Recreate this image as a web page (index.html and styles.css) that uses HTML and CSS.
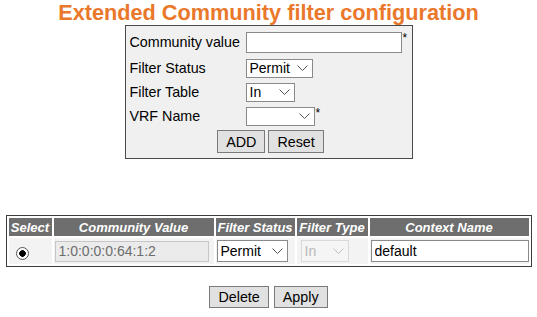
FILE: index.html
```html
<!DOCTYPE html>
<html lang="en">
<head>
    <meta charset="UTF-8">
    <meta name="viewport" content="width=device-width, initial-scale=1.0">
    <title>Extended Community filter configuration</title>
    <link rel="stylesheet" href="styles.css">
</head>
<body>
<h1 class="page-title">Extended Community filter configuration</h1>

<form class="add-box" onsubmit="return false;">
    <label for="commValue">Community value</label>
    <div class="field"><input type="text" id="commValue" class="text-in wide"><span class="req">*</span></div>

    <label for="filterStatus">Filter Status</label>
    <div class="field">
        <select id="filterStatus" class="sel sel-status">
            <option>Permit</option>
            <option>Deny</option>
        </select>
    </div>

    <label for="filterTable">Filter Table</label>
    <div class="field">
        <select id="filterTable" class="sel sel-table">
            <option>In</option>
            <option>Out</option>
        </select>
    </div>

    <label for="vrfName">VRF Name</label>
    <div class="field">
        <select id="vrfName" class="sel sel-vrf">
            <option></option>
        </select><span class="req">*</span>
    </div>

    <div class="btn-row">
        <button type="submit" class="btn">ADD</button>
        <button type="reset" class="btn">Reset</button>
    </div>
</form>

<table class="list-table">
    <colgroup>
        <col class="c-select">
        <col class="c-value">
        <col class="c-status">
        <col class="c-type">
        <col class="c-context">
    </colgroup>
    <tr>
        <th>Select</th>
        <th>Community Value</th>
        <th>Filter Status</th>
        <th>Filter Type</th>
        <th>Context Name</th>
    </tr>
    <tr>
        <td class="radio-cell"><input type="radio" name="sel" class="radio" checked></td>
        <td><input type="text" class="text-in cell-in" value="1:0:0:0:0:64:1:2" disabled></td>
        <td>
            <select class="sel sel-row">
                <option>Permit</option>
                <option>Deny</option>
            </select>
        </td>
        <td>
            <select class="sel sel-row-type" disabled>
                <option>In</option>
            </select>
        </td>
        <td><input type="text" class="text-in context-in" value="default"></td>
    </tr>
</table>

<div class="bottom-btns">
    <button type="button" class="btn">Delete</button>
    <button type="button" class="btn">Apply</button>
</div>
</body>
</html>
```

FILE: styles.css
```css
body {
    margin: 0;
    font-family: "Liberation Sans", Arial, sans-serif;
    font-size: 14px;
    color: #000;
    background: #fff;
}

.page-title {
    margin: 0;
    height: 25px;
    line-height: 26px;
    text-align: center;
    font-size: 21.7px;
    font-weight: bold;
    color: #ea782b;
}

/* add form box */
.add-box {
    width: 278px;
    margin: 0 auto;
    padding: 2px 4px 3px 4px;
    background-color: #f0f0f0;
    border: 1px solid #4a4a4a;
    display: grid;
    grid-template-columns: 116px auto;
    grid-template-rows: 28px 24px 24px 24px 27px;
    align-items: center;
}

.add-box label {
    font-size: 14.3px;
    line-height: 16px;
}

.field {
    display: flex;
    align-items: center;
}

.req {
    align-self: flex-start;
    margin-top: 1px;
    margin-left: 1px;
    font-size: 12px;
    line-height: 10px;
}

.text-in {
    box-sizing: border-box;
    height: 21px;
    margin: 0;
    padding: 1px 3px;
    border: 1px solid #8a8a8a;
    background: #fff;
    font-family: "Liberation Sans", Arial, sans-serif;
    font-size: 14px;
    color: #000;
    outline: none;
}

.wide {
    width: 156px;
}

.sel {
    box-sizing: border-box;
    height: 19px;
    margin: 0;
    padding: 0 18px 0 3px;
    border: 1px solid #8a8a8a;
    border-radius: 0;
    background: #fff url("data:image/svg+xml,%3Csvg xmlns='http://www.w3.org/2000/svg' width='11' height='6'%3E%3Cpath d='M0.5 0.5 L5.5 5.5 L10.5 0.5' fill='none' stroke='%23555' stroke-width='1'/%3E%3C/svg%3E") no-repeat right 4px center;
    -webkit-appearance: none;
    appearance: none;
    font-family: "Liberation Sans", Arial, sans-serif;
    font-size: 14px;
    color: #000;
    line-height: 17px;
}

.sel-status { width: 67px; }
.sel-table  { width: 49px; }
.sel-vrf    { width: 69px; }

.btn-row {
    grid-column: 1 / 3;
    display: flex;
    justify-content: center;
    gap: 3px;
    padding-left: 4px;
}

.btn {
    box-sizing: border-box;
    height: 23px;
    margin: 0;
    padding: 0 8px;
    border: 1px solid #7a7a7a;
    background-color: #e1e1e1;
    font-family: "Liberation Sans", Arial, sans-serif;
    font-size: 14.3px;
    color: #000;
    cursor: pointer;
}

.btn:hover {
    background-color: #e5f1fb;
}

/* list table */
.list-table {
    width: 526px;
    margin: 56px auto 0 auto;
    table-layout: fixed;
    border: 1px solid #3c3c3c;
    border-spacing: 2px;
}

.c-select  { width: 43px; }
.c-value   { width: 160px; }
.c-status  { width: 79px; }
.c-type    { width: 71px; }
.c-context { width: 159px; }

.list-table th {
    height: 18px;
    padding: 0;
    background-color: #6e6e6e;
    color: #fff;
    font-size: 13px;
    font-weight: bold;
    font-style: italic;
    white-space: nowrap;
    overflow: hidden;
}

.list-table td {
    height: 26px;
    padding: 0 1px;
    background-color: #f3f3f3;
}

.radio-cell {
    padding-left: 7px !important;
}

.radio {
    -webkit-appearance: none;
    appearance: none;
    width: 13px;
    height: 13px;
    margin: 4px 0 0 0;
    border: 1px solid #555;
    border-radius: 50%;
    background: radial-gradient(circle, #000 0 3px, #fff 3.6px);
    vertical-align: top;
}

.cell-in {
    width: 154px;
    background-color: #ebebeb;
    border-color: #c6c6c6;
    color: #6d6d6d;
}

.sel-row {
    width: 71px;
    height: 22px;
}

.sel-row-type {
    width: 48px;
    height: 22px;
    margin-left: 3px;
    border-color: #cfcfcf;
    background-color: #f6f6f6;
    color: #a0a0a0;
    background-image: url("data:image/svg+xml,%3Csvg xmlns='http://www.w3.org/2000/svg' width='11' height='6'%3E%3Cpath d='M0.5 0.5 L5.5 5.5 L10.5 0.5' fill='none' stroke='%23aaa' stroke-width='1'/%3E%3C/svg%3E");
}

.context-in {
    width: 158px;
    height: 22px;
}

.bottom-btns {
    display: flex;
    justify-content: center;
    gap: 5px;
    margin-top: 19px;
}

.bottom-btns .btn {
    height: 22px;
}
```
